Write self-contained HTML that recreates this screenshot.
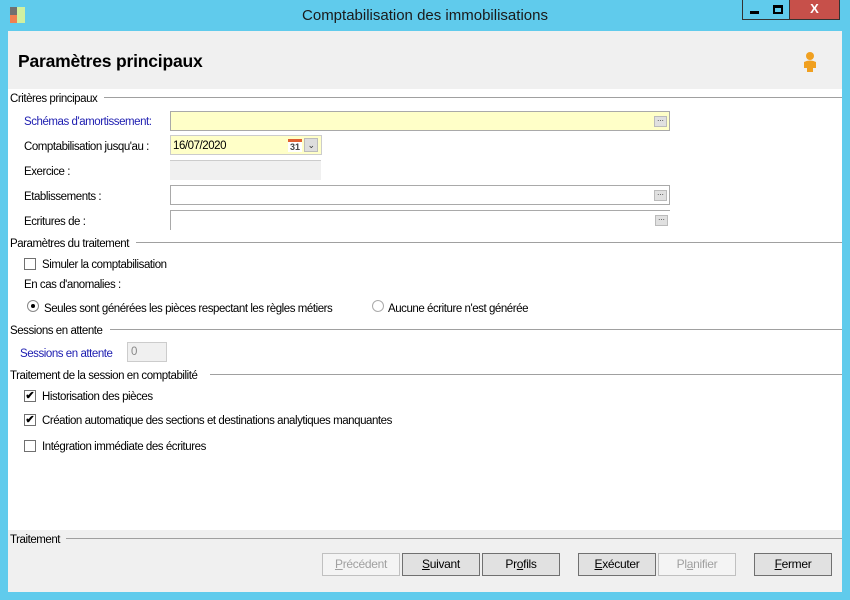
<!DOCTYPE html>
<html><head><meta charset="utf-8"><style>
*{margin:0;padding:0;box-sizing:border-box}
body{width:850px;height:600px;background:#60cbec;position:relative;overflow:hidden;font-family:"Liberation Sans",sans-serif;font-size:11.5px;color:#000;letter-spacing:-0.45px}
.a{position:absolute;white-space:nowrap}
.t{position:absolute;white-space:nowrap;margin-top:2px}
.client{position:absolute;left:8px;top:31px;width:834px;height:561px;background:#fff}
.hdr{position:absolute;left:8px;top:31px;width:834px;height:58px;background:#f0f0f0}
.ftr{position:absolute;left:8px;top:530px;width:834px;height:62px;background:#f0f0f0}
.line{position:absolute;height:1px;background:#a0a0a0}
.in{position:absolute;border:1px solid #a9a9a9;height:20px}
.dots{position:absolute;right:2px;top:4px;width:13px;height:11px;background:#e0e0e0;border:1px solid #bbb;font-size:8px;line-height:4px;text-align:center;color:#333;letter-spacing:0}
.cb{position:absolute;width:12px;height:12px;border:1px solid #707070;background:#fff}
.btn{position:absolute;top:553px;height:23px;width:78px;border:1px solid #707070;background:#e1e1e1;text-align:center;line-height:21px;font-size:12px;letter-spacing:-0.3px}
.dis{color:#a0a0a0;border-color:#c0c0c0;background:#f4f4f4}
.blue{color:#1c1cb0}
</style></head><body>
<div class="client"></div>
<div class="hdr"></div>
<div class="ftr"></div>
<!-- title bar -->
<div class="a" style="left:10px;top:7px;width:7px;height:8px;background:#707070"></div>
<div class="a" style="left:10px;top:15px;width:7px;height:8px;background:#f08050"></div>
<div class="a" style="left:17px;top:7px;width:8px;height:16px;background:#d0f0a0"></div>
<div class="a" style="left:0;top:7px;width:850px;text-align:center;font-size:15px;color:#1a1a1a;letter-spacing:0">Comptabilisation des immobilisations</div>
<div class="a" style="left:742px;top:0;width:25px;height:20px;border:1px solid #333;border-top:none;background:#60cbec"></div>
<div class="a" style="left:750px;top:11px;width:9px;height:3px;background:#000"></div>
<div class="a" style="left:766px;top:0;width:24px;height:20px;border:1px solid #333;border-top:none;border-left:none;background:#60cbec"></div>
<div class="a" style="left:773px;top:5px;width:10px;height:9px;border:2px solid #000;border-top-width:3px"></div>
<div class="a" style="left:789px;top:0;width:51px;height:20px;background:#c7504a;border:1px solid #333;border-top:none;color:#fff;font-weight:bold;text-align:center;line-height:18px;font-size:13px;letter-spacing:0">X</div>
<!-- header -->
<div class="a" style="left:18px;top:51px;font-size:17.5px;font-weight:bold;letter-spacing:-0.2px">Paramètres principaux</div>
<svg class="a" style="left:801px;top:51px" width="18" height="22" viewBox="0 0 18 22"><circle cx="9" cy="5" r="4" fill="#f0a020"/><path d="M3 11 Q9 8 15 11 L15 17 L12 17 L12 21 L6 21 L6 17 L3 17Z" fill="#f0a020"/></svg>
<!-- section 1 -->
<div class="line" style="left:104px;top:97px;width:738px"></div>
<div class="t" style="left:10px;top:91px">Critères principaux</div>
<div class="t blue" style="left:24px;top:114px">Schémas d'amortissement:</div>
<div class="in" style="left:170px;top:111px;width:500px;background:#ffffc8"><div class="dots">...</div></div>
<div class="t" style="left:24px;top:139px">Comptabilisation jusqu'au :</div>
<div class="in" style="left:170px;top:135px;width:152px;background:#ffffc8;border-color:#ccc"></div>
<div class="t" style="left:173px;top:138px">16/07/2020</div>
<div class="a" style="left:288px;top:139px;width:14px;height:13px;background:#fff;border-top:3px solid #e06030;font-size:9px;font-weight:bold;color:#444;line-height:10px;text-align:center;letter-spacing:0">31</div>
<div class="a" style="left:304px;top:138px;width:14px;height:14px;background:#ddd;border:1px solid #bbb;font-size:9px;text-align:center;line-height:12px;color:#333">⌄</div>
<div class="t" style="left:24px;top:164px">Exercice :</div>
<div class="a" style="left:170px;top:160px;width:151px;height:20px;background:#f0f0f0;border-top:1px solid #ccc"></div>
<div class="t" style="left:24px;top:189px">Etablissements :</div>
<div class="in" style="left:170px;top:185px;width:500px"><div class="dots">...</div></div>
<div class="t" style="left:24px;top:214px">Ecritures de :</div>
<div class="in" style="left:170px;top:210px;width:500px;border-bottom:none;border-right:none"><div class="dots">...</div></div>
<!-- section 2 -->
<div class="line" style="left:136px;top:242px;width:706px"></div>
<div class="t" style="left:10px;top:236px">Paramètres du traitement</div>
<div class="cb" style="left:24px;top:258px"></div>
<div class="t" style="left:42px;top:257px">Simuler la comptabilisation</div>
<div class="t" style="left:24px;top:277px">En cas d'anomalies :</div>
<div class="a" style="left:27px;top:300px;width:12px;height:12px;border-radius:50%;border:1px solid #888;background:#fff"></div>
<div class="a" style="left:31px;top:304px;width:4px;height:4px;border-radius:50%;background:#000"></div>
<div class="t" style="left:44px;top:301px">Seules sont générées les pièces respectant les règles métiers</div>
<div class="a" style="left:372px;top:300px;width:12px;height:12px;border-radius:50%;border:1px solid #aaa;background:#fff"></div>
<div class="t" style="left:388px;top:301px">Aucune écriture n'est générée</div>
<!-- section 3 -->
<div class="line" style="left:110px;top:329px;width:732px"></div>
<div class="t" style="left:10px;top:323px">Sessions en attente</div>
<div class="t blue" style="left:20px;top:346px">Sessions en attente</div>
<div class="a" style="left:127px;top:342px;width:40px;height:20px;background:#f0f0f0;border:1px solid #ccc;color:#888;padding:3px 0 0 3px">0</div>
<!-- section 4 -->
<div class="line" style="left:210px;top:374px;width:632px"></div>
<div class="t" style="left:10px;top:368px">Traitement de la session en comptabilité</div>
<div class="cb" style="left:24px;top:390px;font-size:11px;line-height:10px;text-align:center;font-weight:bold;letter-spacing:0">✔</div>
<div class="t" style="left:42px;top:389px">Historisation des pièces</div>
<div class="cb" style="left:24px;top:414px;font-size:11px;line-height:10px;text-align:center;font-weight:bold;letter-spacing:0">✔</div>
<div class="t" style="left:42px;top:413px">Création automatique des sections et destinations analytiques manquantes</div>
<div class="cb" style="left:24px;top:440px"></div>
<div class="t" style="left:42px;top:439px">Intégration immédiate des écritures</div>
<!-- footer -->
<div class="line" style="left:66px;top:538px;width:776px"></div>
<div class="t" style="left:10px;top:532px">Traitement</div>
<div class="btn dis" style="left:322px"><u>P</u>récédent</div>
<div class="btn" style="left:402px"><u>S</u>uivant</div>
<div class="btn" style="left:482px">Pr<u>o</u>fils</div>
<div class="btn" style="left:578px"><u>E</u>xécuter</div>
<div class="btn dis" style="left:658px">Pl<u>a</u>nifier</div>
<div class="btn" style="left:754px"><u>F</u>ermer</div>
</body></html>
